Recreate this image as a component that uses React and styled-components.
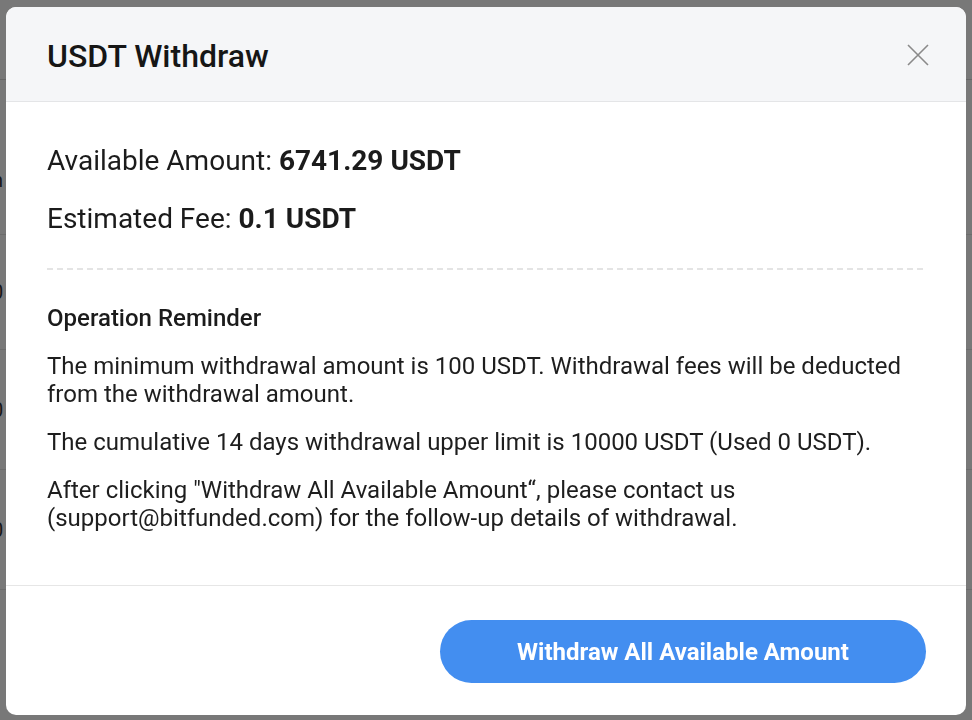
import React from "react"
import styled, { createGlobalStyle } from "styled-components"

const GlobalStyle = createGlobalStyle`
  html, body {
    margin: 0;
    padding: 0;
    background: #ffffff;
  }
  body {
    font-family: "Roboto", "Liberation Sans", sans-serif;
    color: #1b1b1b;
  }
  * {
    box-sizing: border-box;
  }
`

// the page behind the dialog, mostly hidden by the overlay
const Page = styled.div`
  width: 972px;
  height: 720px;
  overflow: hidden;
`

const PageHeader = styled.div`
  height: 80px;
  border-bottom: 1px solid #d8d8d8;
`

const PageRow = styled.div`
  height: ${p => p.h}px;
  border-bottom: 1px solid #e6e6e6;
  display: flex;
  align-items: center;
  padding-top: ${p => p.shift || 0}px;
  font-size: 20px;
  color: #333;
  margin-left: -8px;
`

const Overlay = styled.div`
  position: fixed;
  inset: 0;
  background: rgba(0, 0, 0, 0.53);
  display: flex;
  align-items: flex-start;
  justify-content: center;
  padding-top: 7px;
`

const Modal = styled.div`
  width: 960px;
  height: 708px;
  background: #ffffff;
  border-radius: 10px;
  overflow: hidden;
  display: flex;
  flex-direction: column;
`

const Header = styled.div`
  height: 95px;
  flex-shrink: 0;
  background: #f5f6f8;
  border-bottom: 1px solid #e4e5e7;
  display: flex;
  align-items: center;
  justify-content: space-between;
  padding: 0 36px 0 41px;
`

const Title = styled.h2`
  margin: 0;
  padding-top: 3px;
  font-size: 32px;
  font-weight: 500;
  color: #161616;
`

const CloseButton = styled.button`
  width: 24px;
  height: 24px;
  padding: 0;
  margin-top: 2px;
  border: none;
  background: none;
  display: flex;
  align-items: center;
  justify-content: center;
  cursor: pointer;
`

const Body = styled.div`
  flex: 1;
  padding: 41px 40px 0 41px;
  border-bottom: 1px solid #e6e6e6;
`

const Stat = styled.div`
  font-size: 28px;
  line-height: 36px;
  font-weight: 400;
  margin-bottom: ${p => p.gap || 0}px;

  b {
    font-weight: 700;
  }
`

const Divider = styled.div`
  height: 2px;
  margin: 31px 0 34px;
  background-image: repeating-linear-gradient(
    to right,
    #e4e4e4 0,
    #e4e4e4 6px,
    transparent 6px,
    transparent 10px
  );
`

const ReminderTitle = styled.div`
  font-size: 24px;
  line-height: 28px;
  font-weight: 500;
  margin-bottom: 20px;
`

const Para = styled.p`
  margin: 0 0 20px;
  font-size: 24px;
  line-height: 28px;
  color: #1e1e1e;
`

const Footer = styled.div`
  height: 129px;
  flex-shrink: 0;
  display: flex;
  justify-content: flex-end;
  align-items: flex-start;
  padding: 34px 40px 0;
`

const PrimaryButton = styled.button`
  width: 486px;
  height: 63px;
  border: none;
  border-radius: 32px;
  background: #438ef0;
  color: #ffffff;
  font-family: inherit;
  font-size: 24px;
  font-weight: 700;
  cursor: pointer;
`

const rows = [
  { h: 155, t: "n", shift: 46 },
  { h: 115, t: "0" },
  { h: 120, t: "0" },
  { h: 120, t: "0" },
]

const App = () => {
  return (
    <>
      <GlobalStyle />
      <Page>
        <PageHeader />
        {rows.map((r, i) => (
          <PageRow key={i} h={r.h} shift={r.shift}>{r.t}</PageRow>
        ))}
      </Page>
      <Overlay>
        <Modal>
          <Header>
            <Title>USDT Withdraw</Title>
            <CloseButton aria-label="close">
              <svg width="22" height="22" viewBox="0 0 22 22">
                <path d="M1 1 L21 21 M21 1 L1 21" stroke="#8a8a8a" strokeWidth="1.6" fill="none" />
              </svg>
            </CloseButton>
          </Header>
          <Body>
            <Stat gap={22}>Available Amount: <b>6741.29 USDT</b></Stat>
            <Stat>Estimated Fee: <b>0.1 USDT</b></Stat>
            <Divider />
            <ReminderTitle>Operation Reminder</ReminderTitle>
            <Para>
              The minimum withdrawal amount is 100 USDT. Withdrawal fees will be deducted from the withdrawal amount.
            </Para>
            <Para>
              The cumulative 14 days withdrawal upper limit is 10000 USDT (Used 0 USDT).
            </Para>
            <Para>
              After clicking "Withdraw All Available Amount“, please contact us (support@bitfunded.com) for the follow-up details of withdrawal.
            </Para>
          </Body>
          <Footer>
            <PrimaryButton>Withdraw All Available Amount</PrimaryButton>
          </Footer>
        </Modal>
      </Overlay>
    </>
  )
}

export default App
